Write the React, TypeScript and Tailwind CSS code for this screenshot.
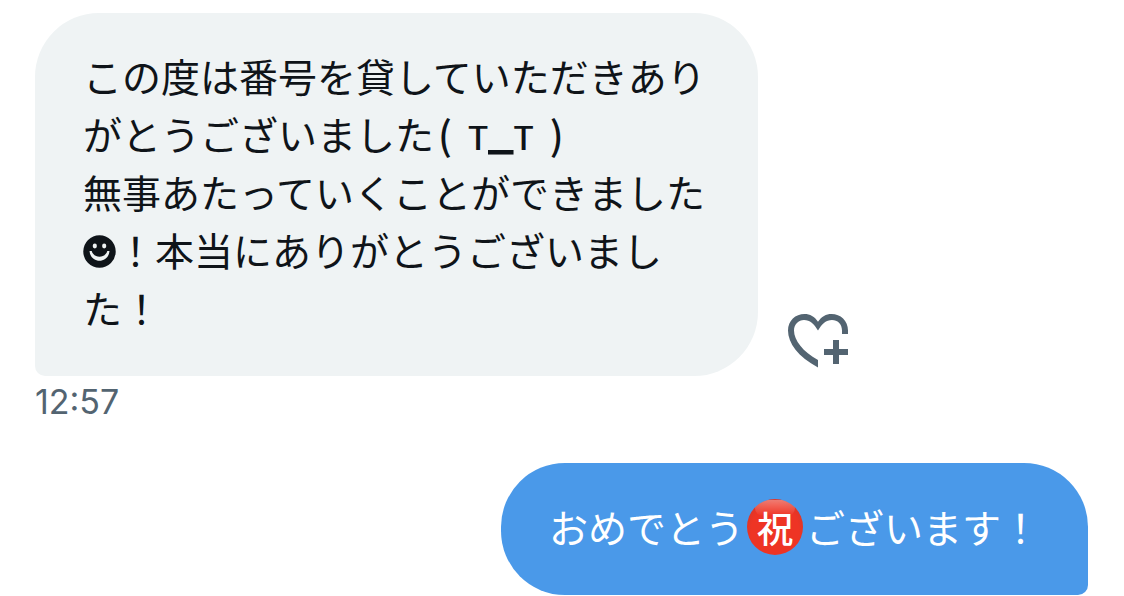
import React from 'react';
import { clsx } from 'clsx';

const HeartPlusIcon = () => (
  <svg viewBox="0 0 60 54" className="block w-[60px] h-[54px]" fill="currentColor" aria-hidden="true">
    <path d="M60 20H54V16.5C54 10 49.5 6 44 6C38 6 34 10 30 16.5C26 10 22 6 16 6C10.500 6 6 10.500 6 16.500C6 26 15 38 30 46V53.400C10 43 0 29 0 16.500C0 6.500 7.500 0 16.500 0C22 0 26.500 2.500 30 7.800C33.500 2.500 38 0 43.500 0C52.500 0 60 6.500 60 16.500Z" />
    <path d="M45 26h6v9h9v6h-9v9h-6v-9h-9v-6h9z" />
  </svg>
);

const SmileIcon = () => (
  <svg viewBox="0 0 33 33" className="inline-block size-[33px] align-[-2px]" role="img" aria-label="☻">
    <circle cx="16.5" cy="16.5" r="16.200" fill="currentColor" />
    <ellipse cx="11.800" cy="11" rx="2.100" ry="2.400" fill="#eff3f4" />
    <ellipse cx="21.200" cy="11" rx="2.100" ry="2.400" fill="#eff3f4" />
    <path d="M6.500 16C7.500 29 25.500 29 26.500 16H24.300C22.500 23.500 10.500 23.500 8.700 16Z" fill="#eff3f4" />
  </svg>
);

// Full-width exclamation mark
const BANG = '\uFF01';

// Red "congratulations" mark
const IwaiMark = () => (
  <span className="inline-flex size-14 mx-[3px] -my-2 items-center justify-center rounded-full align-baseline bg-radial-[at_50%_60%] from-[#ee3424] from-60% to-[#c2392e] text-4xl leading-none font-medium relative overflow-hidden">
    <span className="absolute top-px inset-x-2 h-4 rounded-full bg-linear-to-b from-white/35 to-white/0" />
    <span className="relative">祝</span>
  </span>
);

const Bubble = ({ own, children }: { own?: boolean; children: React.ReactNode }) => (
  <div
    className={clsx(
      'rounded-[64px] px-12 text-[39px] leading-[58px]',
      own
        ? 'pt-[34px] pb-10 rounded-br-[10px] bg-[#4a99e9] text-white'
        : 'pt-[33px] pb-10 rounded-bl-[10px] bg-[#eff3f4] text-[#0f1419]'
    )}
  >
    {children}
  </div>
);

export default function App() {
  return (
    <main
      lang="ja"
      className="flex flex-col bg-white pl-[35px] pr-9 pt-[13px] font-['Noto_Sans_CJK_JP',sans-serif]"
    >
      <div className="flex items-end gap-[30px]">
        <div className="max-w-[723px]">
          <Bubble>
            <p>
              この度は番号を貸していただきありがとうございました
              <span className="ml-1 font-medium">(</span>
              <span className="mx-4 text-[44px] leading-none font-['Liberation_Sans',sans-serif]">
                т<span className="text-[56px] leading-[40px] font-['Inter',sans-serif]">_</span>т
              </span>
              <span className="font-medium">)</span>
            </p>
            <p>
              無事あたっていくことができました
              <SmileIcon />
              {`${BANG}本当にありがとうございました${BANG}`}
            </p>
          </Bubble>
        </div>
        <button type="button" aria-label="リアクションを追加" className="mb-2 text-[#536471]">
          <HeartPlusIcon />
        </button>
      </div>
      <time className="mt-1 text-[34px] leading-[44px] text-[#536471] font-['Inter',sans-serif]">12:57</time>

      <div className="mt-[39px] flex justify-end">
        <Bubble own>
          <p>
            おめでとう
            <IwaiMark />
            {`ございます${BANG}`}
          </p>
        </Bubble>
      </div>
    </main>
  );
}
